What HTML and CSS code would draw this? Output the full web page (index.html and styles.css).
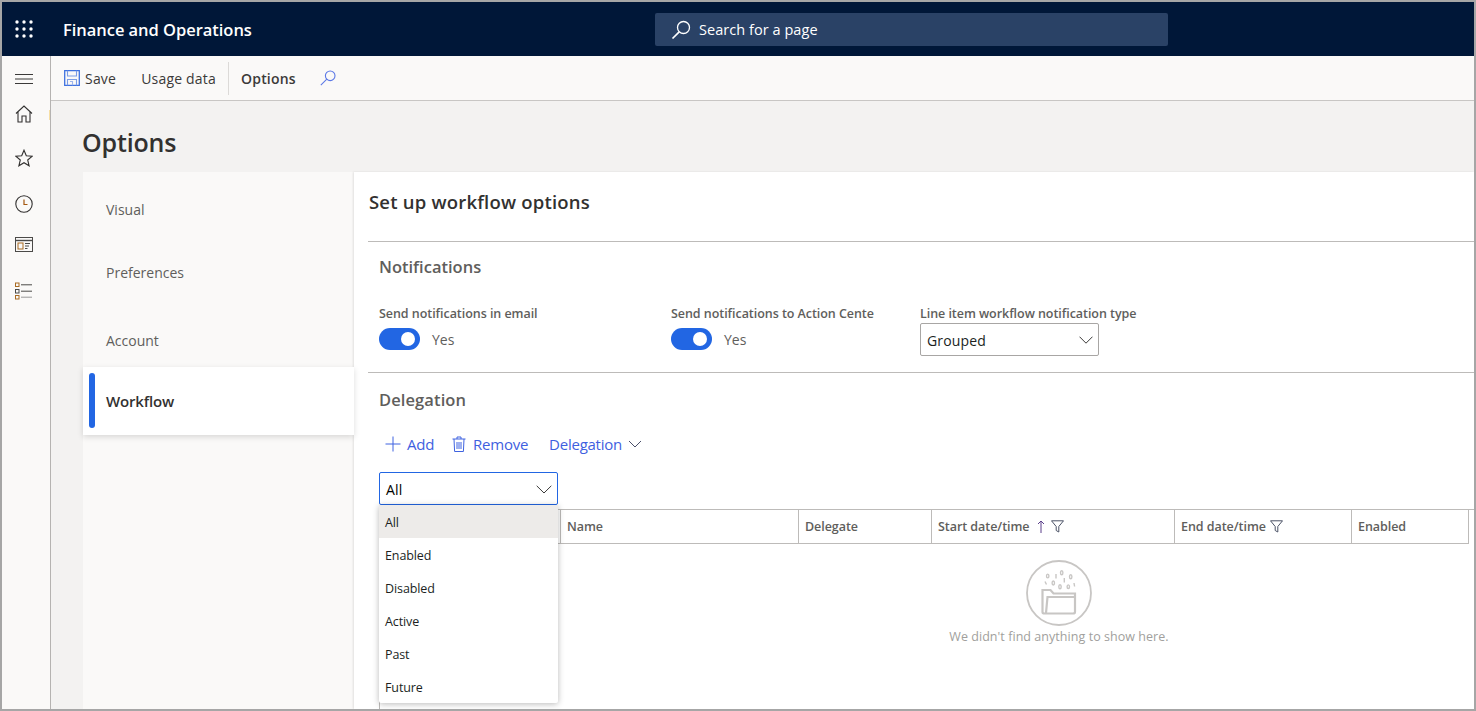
FILE: index.html
```html
<!DOCTYPE html>
<html lang="en">
<head>
<meta charset="utf-8">
<title>Options</title>
<link rel="stylesheet" href="styles.css">
</head>
<body>
<div class="frame">
  <header class="topbar">
    <svg class="waffle" width="18" height="18" viewBox="0 0 18 18" fill="#fff"><circle cx="2" cy="2" r="1.7"/><circle cx="9" cy="2" r="1.7"/><circle cx="16" cy="2" r="1.7"/><circle cx="2" cy="9" r="1.7"/><circle cx="9" cy="9" r="1.7"/><circle cx="16" cy="9" r="1.7"/><circle cx="2" cy="16" r="1.7"/><circle cx="9" cy="16" r="1.7"/><circle cx="16" cy="16" r="1.7"/></svg>
    <div class="brand">Finance and Operations</div>
    <div class="searchbox">
      <svg width="20" height="20" viewBox="0 0 20 20" fill="none" stroke="#fff" stroke-width="1.3"><circle cx="12.5" cy="7.5" r="6"/><path d="M8.2 11.8 1.5 18.5" stroke-width="1.7"/></svg>
      <span>Search for a page</span>
    </div>
  </header>
  <div class="below">
    <nav class="rail">
      <span class="rail-mark"></span>
      <svg class="ico hamburger" width="18" height="10" viewBox="0 0 18 10" stroke="#3b3a39" stroke-width="1"><path d="M0 .5h18M0 5h18M0 9.500h18"/></svg>
      <svg class="ico home" width="18" height="18" viewBox="0 0 18 18" fill="none" stroke="#323130" stroke-width="1.100"><path d="M1 8.500 9 1l8 7.500M3 7v10h4v-6h4v6h4V7"/></svg>
      <svg class="ico star" width="18" height="18" viewBox="0 0 18 18" fill="none" stroke="#323130" stroke-width="1.100"><path d="M9 1.200 11.300 6.800 17.200 7.200 12.700 11 14.100 16.800 9 13.700 3.900 16.800 5.300 11 .8 7.200 6.700 6.800Z"/></svg>
      <svg class="ico clock" width="18" height="18" viewBox="0 0 18 18" fill="none" stroke="#323130" stroke-width="1.100"><circle cx="9" cy="9" r="8.200"/><path d="M9 4.500V9.500H12.500" stroke="#a4570f" stroke-width="1.200"/></svg>
      <svg class="ico work" width="18" height="15" viewBox="0 0 18 15" fill="none" stroke="#4b4a48" stroke-width="1"><rect x=".5" y=".5" width="17" height="14"/><path d="M.5 3.500h17" stroke-width="1.400"/><rect x="3" y="6" width="5" height="6" stroke="#a86a20"/><path d="M10 6.500h5M10 9h4M10 11.500h2.500"/></svg>
      <svg class="ico list" width="18" height="18" viewBox="0 0 18 18" fill="none" stroke="#4b4a48" stroke-width="1"><rect x=".5" y="1" width="3.500" height="3.500" stroke="#a86a20"/><rect x=".5" y="7.500" width="3.500" height="3.500"/><rect x=".5" y="13.500" width="3.500" height="3.500" stroke="#a86a20"/><path d="M6 2.800h11M6 9.200h11"/><path d="M6 15.200h11" stroke="#999"/></svg>
    </nav>
    <div class="work-area">
      <div class="cmdbar">
        <button class="cmd save">
          <svg width="16" height="16" viewBox="0 0 16 16" fill="none" stroke="#3f72e0" stroke-width="1.300"><path d="M.7.700h14.600v14.600H.7z"/><path d="M3.500.7v5.300h9V.7" stroke="#7b9de6" stroke-width="1.100"/><path d="M3.500 15.300V9.500h9v5.800" stroke="#7b9de6" stroke-width="1.100"/><path d="M6 11.500h2.500v3.800" stroke="#9db5ec" stroke-width="1.100"/></svg>
          Save
        </button>
        <button class="cmd usage">Usage data</button>
        <span class="cmdsep"></span>
        <button class="cmd options">Options</button>
        <svg class="cmdsearch" width="16" height="16" viewBox="0 0 16 16" fill="none" stroke="#5b78e6" stroke-width="1.100"><circle cx="10.200" cy="5.800" r="4.800"/><path d="M6.800 9.200.8 15.200"/></svg>
      </div>
      <main class="page">
        <h1 class="title">Options</h1>
        <div class="panels">
          <aside class="tabs">
            <div class="tab t1">Visual</div>
            <div class="tab t2">Preferences</div>
            <div class="tab t3">Account</div>
            <div class="tab active"><span class="marker"></span>Workflow</div>
          </aside>
          <section class="content">
            <h2 class="heading">Set up workflow options</h2>
            <div class="section notif">
              <h3 class="subhead">Notifications</h3>
              <div class="fields">
                <div class="field f1">
                  <div class="label">Send notifications in email</div>
                  <div class="toggle-row"><span class="toggle"><span class="knob"></span></span><span class="yes">Yes</span></div>
                </div>
                <div class="field f2">
                  <div class="label clip">Send notifications to Action Center</div>
                  <div class="toggle-row"><span class="toggle"><span class="knob"></span></span><span class="yes">Yes</span></div>
                </div>
                <div class="field f3">
                  <div class="label">Line item workflow notification type</div>
                  <div class="select grouped">Grouped<svg class="chev" width="14" height="8" viewBox="0 0 14 8" fill="none" stroke="#3b3a39" stroke-width="1"><path d="M.5.700 7 7.200 13.500.700"/></svg></div>
                </div>
              </div>
            </div>
            <div class="section deleg">
              <h3 class="subhead">Delegation</h3>
              <div class="actions">
                <span class="action add"><svg width="16" height="16" viewBox="0 0 16 16" stroke="#3f63e0" stroke-width="1"><path d="M8 .5v15M.5 8h15"/></svg>Add</span>
                <span class="action remove"><svg width="14" height="16" viewBox="0 0 14 16" fill="none" stroke="#3f63e0" stroke-width="1"><path d="M.5 3h13M5 3V1h4v2M2 3l.6 12.500h8.800L12 3M5 6v7M7 6v7M9 6v7"/></svg>Remove</span>
                <span class="action dropdown">Delegation<svg width="14" height="8" viewBox="0 0 14 8" fill="none" stroke="#4a4f6a" stroke-width="1"><path d="M1 1 7 7l6-6"/></svg></span>
              </div>
              <div class="select focus">All<svg class="chev" width="16" height="9" viewBox="0 0 16 9" fill="none" stroke="#3b3a39" stroke-width="1"><path d="M.7.800 8 8 15.300.800"/></svg></div>
              <div class="grid">
                <div class="grid-head">
                  <div class="col c0"></div>
                  <div class="col c1">Name</div>
                  <div class="col c2">Delegate</div>
                  <div class="col c3">Start date/time
                    <svg class="arrow" width="8" height="13" viewBox="0 0 8 13" fill="none" stroke="#5b3f8a" stroke-width="1"><path d="M4 13V1M1 4l3-3 3 3"/></svg>
                    <svg class="filter" width="13" height="13" viewBox="0 0 13 13" fill="none" stroke="#4b5266" stroke-width="1"><path d="M.5.800h12L7.800 6.500V12l-2.600-1.500v-4Z"/></svg>
                  </div>
                  <div class="col c4">End date/time
                    <svg class="filter" width="13" height="13" viewBox="0 0 13 13" fill="none" stroke="#4b5266" stroke-width="1"><path d="M.5.800h12L7.800 6.500V12l-2.600-1.500v-4Z"/></svg>
                  </div>
                  <div class="col c5">Enabled</div>
                </div>
                <div class="empty">
                  <svg width="66" height="66" viewBox="0 0 66 66" fill="none" stroke="#c8c6c4">
                    <circle cx="33" cy="33" r="32" stroke-width="1.800"/>
                    <path d="M16.500 52V30h8l3 3.500h21.500V52c0 1-1 1.500-2 1.500H18.500c-1 0-2-.5-2-1.500Z" stroke-width="2.200"/>
                    <path d="M20 53 21.500 37h27.500" stroke-width="2.200"/>
                    <g stroke-width="1.400">
                      <ellipse cx="21.700" cy="16" rx="1.200" ry="1.900"/><ellipse cx="35.700" cy="12.700" rx="1.200" ry="2"/><ellipse cx="44.700" cy="16.700" rx="1.200" ry="2"/><ellipse cx="27.300" cy="23" rx="1.200" ry="2"/><ellipse cx="34" cy="26.700" rx="1.200" ry="2"/><ellipse cx="42.300" cy="26.700" rx="1.200" ry="1.800"/>
                      <path d="M30 14v4.500M38.300 18v4.500M19 21.500l1.500 3M48 23l.6 3.500"/>
                    </g>
                  </svg>
                  <div class="empty-text">We didn't find anything to show here.</div>
                </div>
              </div>
              <ul class="menu">
                <li class="sel">All</li>
                <li>Enabled</li>
                <li>Disabled</li>
                <li>Active</li>
                <li>Past</li>
                <li>Future</li>
              </ul>
            </div>
          </section>
        </div>
      </main>
    </div>
  </div>
</div>
</body>
</html>
```
FILE: styles.css
```css
* { box-sizing: border-box; }
html, body { margin: 0; height: 100%; overflow: hidden; }
body { font-family: "Open Sans", "Noto Sans", sans-serif; color: #323130; background: #fff; }
.frame { width: 1476px; height: 711px; border: 2px solid #a6a6a6; display: flex; flex-direction: column; overflow: hidden; }
button { font: inherit; background: none; border: 0; padding: 0; color: inherit; }
h1, h2, h3 { margin: 0; font-weight: 600; }
ul { list-style: none; margin: 0; padding: 0; }

.topbar { flex: 0 0 54px; background: #001738; display: flex; align-items: center; position: relative; color: #fff; }
.waffle { margin-left: 13px; }
.brand { margin-left: 30px; font-size: 16.500px; font-weight: 600; letter-spacing: -.04px; }
.searchbox { position: absolute; left: 653px; top: 11px; width: 513px; height: 33px; background: #2a4266; border-radius: 2px; display: flex; align-items: center; padding-left: 16px; gap: 8px; font-size: 14.500px; letter-spacing: .05px; }

.below { flex: 1; display: flex; min-height: 0; }
.rail { flex: 0 0 49px; background: #faf9f8; border-right: 1px solid #b5b3b1; position: relative; display: flex; flex-direction: column; align-items: center; padding: 18px 4px 0 0; }
.rail .ico { display: block; }
.rail-mark { position: absolute; right: 0; top: 54px; width: 1px; height: 10px; background: #f7dfa5; }
.home { margin-top: 21px; }
.star { margin-top: 26px; }
.clock { margin-top: 28px; }
.work { margin-top: 24px; }
.list { margin-top: 30px; }

.work-area { flex: 1; display: flex; flex-direction: column; min-width: 0; }
.cmdbar { flex: 0 0 45px; background: #faf9f8; border-bottom: 1px solid #c8c6c4; display: flex; align-items: center; font-size: 14px; padding-left: 13px; color: #3b3a39; }
.cmd { display: flex; align-items: center; gap: 5px; letter-spacing: .2px; }
.usage { margin-left: 25px; }
.cmdsep { width: 1px; height: 33px; background: #dcdad8; margin-left: 12px; }
.options { margin-left: 12px; font-weight: 600; }
.cmdsearch { margin-left: 24px; margin-top: -1px; }

.page { flex: 1; background: #f3f2f1; display: flex; flex-direction: column; padding-left: 31px; min-height: 0; }
.title { font-size: 25px; line-height: 32px; margin-top: 25px; letter-spacing: -.15px; color: #323130; font-weight: 600; }
.panels { flex: 1; display: flex; margin-top: 14px; padding-left: 1px; min-height: 0; }
.tabs { flex: 0 0 270px; background: #faf9f8; font-size: 14px; color: #605e5c; }
.tab { padding-left: 23px; height: 20px; line-height: 20px; }
.t1 { margin-top: 28px; }
.t2 { margin-top: 43px; }
.t3 { margin-top: 48px; }
.tab.active { position: relative; z-index: 1; margin-top: 16px; height: 68px; line-height: 68px; background: #fff; box-shadow: 0 2px 6px rgba(0,0,0,.14); color: #323130; font-weight: 600; width: 271px; font-size: 15px; letter-spacing: -.15px; }
.marker { position: absolute; left: 6px; top: 6px; width: 6px; height: 55px; background: #2266e3; border-radius: 3px; }

.content { flex: 1; background: #fff; padding-left: 14px; min-width: 0; position: relative; box-shadow: -1px 0 2px rgba(0,0,0,.1); }
.heading { font-size: 18.500px; line-height: 26px; margin: 17px 0 0 1px; height: 52px; letter-spacing: .2px; color: #323130; }
.section { border-top: 1px solid #bdbbb9; padding-left: 11px; }
.notif { height: 131px; }
.subhead { font-size: 16.500px; line-height: 24px; padding-top: 13px; box-sizing: content-box; color: #605e5c; letter-spacing: 0; }
.deleg .subhead { padding-top: 15px; letter-spacing: .1px; }
.fields { display: flex; margin-top: 26px; }
.label { font-size: 12.500px; line-height: 17px; font-weight: 600; color: #605e5c; letter-spacing: -.05px; white-space: nowrap; }
.f1 { width: 292px; }
.f2 { width: 249px; }
.clip { width: 203px; overflow: hidden; }
.toggle-row { display: flex; align-items: center; gap: 12px; margin-top: 6px; font-size: 14px; color: #605e5c; }
.toggle { width: 41px; height: 22px; background: #2266e3; border-radius: 11px; position: relative; display: block; }
.knob { position: absolute; right: 5px; top: 4px; width: 14px; height: 14px; border-radius: 50%; background: #fff; }
.select { position: relative; background: #fff; border: 1px solid #a8a6a4; border-radius: 2px; font-size: 14px; display: flex; align-items: center; padding: 1px 0 0 6px; letter-spacing: .15px; color: #201f1e; }
.chev { position: absolute; right: 5px; top: 12px; }
.grouped { width: 179px; height: 33px; margin-top: 1px; }
.deleg { position: relative; }
.actions { display: flex; align-items: center; height: 24px; margin-top: 20px; font-size: 15px; color: #3f5fe0; letter-spacing: -.25px; padding-left: 6px; }
.action { display: flex; align-items: center; gap: 6px; }
.remove { margin-left: 18px; gap: 7px; }
.dropdown { margin-left: 21px; gap: 6px; }
.select.focus { width: 179px; height: 33px; margin-top: 16px; border-color: #2266e3; color: #000; }
.grid { margin-top: 4px; position: relative; border-left: 1px solid #bdbbb9; height: 220px; }
.grid-head { display: flex; height: 35px; border-top: 1px solid #bdbbb9; font-size: 12.500px; font-weight: 600; color: #605e5c; letter-spacing: -.05px; }
.col { border-right: 1px solid #bdbbb9; border-bottom: 1px solid #bdbbb9; padding-left: 6px; display: flex; align-items: center; white-space: nowrap; }
.c0 { width: 181px; }
.c1 { width: 238px; }
.c2 { width: 133px; }
.c3 { width: 243px; }
.c4 { width: 177px; }
.c5 { width: 117px; }
.arrow { margin-left: 7px; margin-right: 6px; }
.c4 .filter { margin-left: 4px; }
.empty { display: flex; flex-direction: column; align-items: center; margin-left: 342px; width: 674px; padding-top: 16px; }
.empty-text { font-size: 12.500px; line-height: 18px; color: #a19f9d; letter-spacing: .05px; margin-top: 2px; }
.menu { position: absolute; left: 11px; top: 132px; width: 179px; background: #fff; box-shadow: 0 1px 6px rgba(0,0,0,.28); border-radius: 0 0 2px 2px; font-size: 12.500px; letter-spacing: -.1px; color: #201f1e; z-index: 5; }
.menu li { height: 33px; line-height: 35px; padding-left: 6px; }
.menu li.sel { background: #edebe9; }
```
